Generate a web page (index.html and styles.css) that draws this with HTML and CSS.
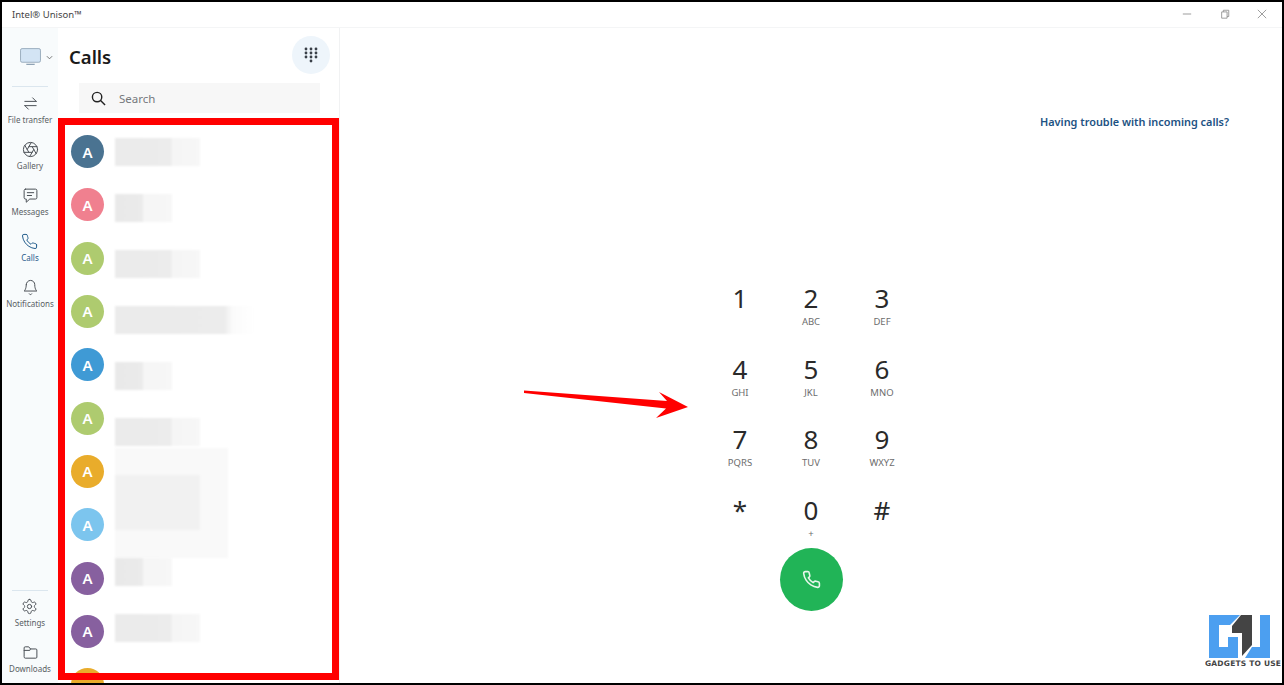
FILE: index.html
```html
<!DOCTYPE html>
<html lang="en">
<head>
  <meta charset="UTF-8">
  <title>Intel Unison - Calls</title>
  <link rel="stylesheet" href="styles.css">
</head>
<body>
  <div class="window">
    <!-- Title bar -->
    <div class="titlebar">
      <span class="app-name">Intel® Unison™</span>
      <div class="win-buttons">
        <svg class="win-icon" viewBox="0 0 12 12"><path d="M1 6h10"/></svg>
        <svg class="win-icon" viewBox="0 0 12 12"><path d="M2 3.5h6.5V11H2zM4 3.5V1.5h6.5V9H8.5"/></svg>
        <svg class="win-icon" viewBox="0 0 12 12"><path d="M1 1l10 10M11 1L1 11"/></svg>
      </div>
    </div>

    <div class="content">
      <!-- Left navigation -->
      <nav class="sidebar">
        <div class="device">
          <svg class="device-icon" viewBox="0 0 20 17">
            <rect class="screen" x="0.5" y="0.5" width="19" height="13" rx="1.5"/>
            <path class="stand" d="M6 15.5h8"/>
          </svg>
          <svg class="chevron" viewBox="0 0 8 5"><path d="M1 1l3 3 3-3"/></svg>
        </div>
        <div class="nav-group nav-top">
          <a class="nav-item">
            <svg class="nav-icon" viewBox="0 0 24 24"><path d="M4 9h16M15 4l5 5M20 15H4M9 20l-5-5"/></svg>
            <span>File transfer</span>
          </a>
          <a class="nav-item">
            <svg class="nav-icon" viewBox="0 0 24 24"><circle cx="12" cy="12" r="10"/><path d="M14.31 8l5.74 9.94M9.69 8h11.48M7.38 12l5.74-9.94M9.69 16L3.95 6.06M14.31 16H2.83M16.62 12l-5.74 9.94"/></svg>
            <span>Gallery</span>
          </a>
          <a class="nav-item">
            <svg class="nav-icon" viewBox="0 0 24 24"><path d="M5 3h14a2 2 0 0 1 2 2v10a2 2 0 0 1-2 2h-8l-5 4.5V17H5a2 2 0 0 1-2-2V5a2 2 0 0 1 2-2z"/><path d="M7.5 8h9M7.5 12h6"/></svg>
            <span>Messages</span>
          </a>
          <a class="nav-item active">
            <svg class="nav-icon" viewBox="0 0 24 24"><path d="M22 16.92v3a2 2 0 0 1-2.18 2 19.79 19.79 0 0 1-8.63-3.07 19.5 19.5 0 0 1-6-6 19.79 19.79 0 0 1-3.07-8.67A2 2 0 0 1 4.11 2h3a2 2 0 0 1 2 1.72 12.84 12.84 0 0 0 .7 2.81 2 2 0 0 1-.45 2.11L8.09 9.91a16 16 0 0 0 6 6l1.27-1.27a2 2 0 0 1 2.11-.45 12.84 12.84 0 0 0 2.81.7A2 2 0 0 1 22 16.92z"/></svg>
            <span>Calls</span>
          </a>
          <a class="nav-item">
            <svg class="nav-icon" viewBox="0 0 24 24"><path d="M6 8a6 6 0 0 1 12 0c0 7 3 9 3 9H3s3-2 3-9"/><path d="M10.3 21a1.94 1.94 0 0 0 3.4 0"/></svg>
            <span>Notifications</span>
          </a>
        </div>
        <div class="nav-group nav-bottom">
          <a class="nav-item">
            <svg class="nav-icon" viewBox="0 0 24 24"><path d="M12.22 2h-.44a2 2 0 0 0-2 2v.18a2 2 0 0 1-1 1.73l-.43.25a2 2 0 0 1-2 0l-.15-.08a2 2 0 0 0-2.73.73l-.22.38a2 2 0 0 0 .73 2.73l.15.1a2 2 0 0 1 1 1.72v.51a2 2 0 0 1-1 1.74l-.15.09a2 2 0 0 0-.73 2.73l.22.38a2 2 0 0 0 2.73.73l.15-.08a2 2 0 0 1 2 0l.43.25a2 2 0 0 1 1 1.73V20a2 2 0 0 0 2 2h.44a2 2 0 0 0 2-2v-.18a2 2 0 0 1 1-1.73l.43-.25a2 2 0 0 1 2 0l.15.08a2 2 0 0 0 2.73-.73l.22-.39a2 2 0 0 0-.73-2.73l-.15-.08a2 2 0 0 1-1-1.74v-.5a2 2 0 0 1 1-1.74l.15-.09a2 2 0 0 0 .73-2.73l-.22-.38a2 2 0 0 0-2.73-.73l-.15.08a2 2 0 0 1-2 0l-.43-.25a2 2 0 0 1-1-1.73V4a2 2 0 0 0-2-2z"/><circle cx="12" cy="12" r="3"/></svg>
            <span>Settings</span>
          </a>
          <a class="nav-item">
            <svg class="nav-icon" viewBox="0 0 24 24"><path d="M3 7V5.5A1.5 1.5 0 0 1 4.5 4h5l2.5 3h7.5A1.5 1.5 0 0 1 21 8.5v10a1.5 1.5 0 0 1-1.5 1.500h-15A1.5 1.5 0 0 1 3 18.5zM3 9h8l1-2"/></svg>
            <span>Downloads</span>
          </a>
        </div>
      </nav>

      <!-- Contact list -->
      <section class="panel">
        <div class="panel-head">
          <h1>Calls</h1>
          <button class="keypad-btn">
            <svg viewBox="0 0 14 16" class="keypad-icon">
              <circle cx="2" cy="2" r="1.4"/><circle cx="7" cy="2" r="1.4"/><circle cx="12" cy="2" r="1.4"/>
              <circle cx="2" cy="6" r="1.4"/><circle cx="7" cy="6" r="1.4"/><circle cx="12" cy="6" r="1.4"/>
              <circle cx="2" cy="10" r="1.4"/><circle cx="7" cy="10" r="1.4"/><circle cx="12" cy="10" r="1.4"/>
              <circle cx="7" cy="14" r="1.4"/>
            </svg>
          </button>
        </div>
        <div class="search">
          <svg class="search-icon" viewBox="0 0 16 16"><circle cx="6.5" cy="6.5" r="5"/><path d="M10.2 10.2L15 15"/></svg>
          <span>Search</span>
        </div>
        <div class="contacts">
          <div class="avatars">
            <div class="avatar slate">A</div>
            <div class="avatar pink">A</div>
            <div class="avatar green">A</div>
            <div class="avatar green">A</div>
            <div class="avatar blue">A</div>
            <div class="avatar green">A</div>
            <div class="avatar amber">A</div>
            <div class="avatar sky">A</div>
            <div class="avatar purple">A</div>
            <div class="avatar purple">A</div>
            <div class="avatar amber"></div>
          </div>
          <!-- blurred out contact names -->
          <div class="names">
            <div class="blur" style="width:85px"></div>
            <div class="blur half" style="width:57px"></div>
            <div class="blur" style="width:85px"></div>
            <div class="blur fade" style="width:140px"></div>
            <div class="blur half" style="width:57px"></div>
            <div class="blur tight" style="width:85px"></div>
            <div class="blur block" style="width:113px"></div>
            <div class="blur half" style="width:57px"></div>
            <div class="blur" style="width:85px"></div>
          </div>
        </div>
      </section>

      <!-- Dial pad -->
      <main class="main">
        <a class="help-link">Having trouble with incoming calls?</a>
        <div class="dialpad">
          <div class="key"><span class="digit">1</span></div>
          <div class="key"><span class="digit">2</span><span class="letters">ABC</span></div>
          <div class="key"><span class="digit">3</span><span class="letters">DEF</span></div>
          <div class="key"><span class="digit">4</span><span class="letters">GHI</span></div>
          <div class="key"><span class="digit">5</span><span class="letters">JKL</span></div>
          <div class="key"><span class="digit">6</span><span class="letters">MNO</span></div>
          <div class="key"><span class="digit">7</span><span class="letters">PQRS</span></div>
          <div class="key"><span class="digit">8</span><span class="letters">TUV</span></div>
          <div class="key"><span class="digit">9</span><span class="letters">WXYZ</span></div>
          <div class="key"><span class="digit">*</span></div>
          <div class="key"><span class="digit">0</span><span class="letters">+</span></div>
          <div class="key"><span class="digit">#</span></div>
        </div>
        <button class="call-btn">
          <svg viewBox="0 0 24 24"><path d="M22 16.92v3a2 2 0 0 1-2.18 2 19.79 19.79 0 0 1-8.63-3.07 19.5 19.5 0 0 1-6-6 19.79 19.79 0 0 1-3.07-8.67A2 2 0 0 1 4.11 2h3a2 2 0 0 1 2 1.72 12.84 12.84 0 0 0 .7 2.81 2 2 0 0 1-.45 2.11L8.09 9.91a16 16 0 0 0 6 6l1.27-1.27a2 2 0 0 1 2.11-.45 12.84 12.84 0 0 0 2.81.7A2 2 0 0 1 22 16.92z"/></svg>
        </button>
      </main>
    </div>

    <!-- Annotations on top of the screenshot -->
    <div class="red-box"></div>
    <svg class="red-arrow" viewBox="0 0 170 32">
      <path d="M3 2.5L3 5L145 20.5L135 30L167 19L138 4L146 13Z"/>
    </svg>
    <div class="watermark">
      <svg viewBox="0 0 61 43">
        <path class="logo-blue" d="M0 0H31L21 10H10V32H19V22H29V43H0Z"/>
        <path class="logo-dark" d="M32 0H43V30L33 41V18H23V11Z"/>
        <path class="logo-blue" d="M51 0H61V43H36L43 32H51Z"/>
      </svg>
      <span>GADGETS TO USE</span>
    </div>
  </div>
</body>
</html>
```

FILE: styles.css
```css
* {
  box-sizing: border-box;
}
html, body {
  margin: 0;
  height: 100%;
  overflow: hidden;
}
body {
  font-family: "Noto Sans", "Open Sans", sans-serif;
  background: #fff;
  color: #1b1b1b;
}
.window {
  position: relative;
  width: 1284px;
  height: 685px;
  display: flex;
  flex-direction: column;
  border: 2px solid #000;
  overflow: hidden;
}
.titlebar {
  height: 26px;
  flex: none;
  display: flex;
  align-items: center;
  justify-content: space-between;
  padding: 0 15px 1px 10px;
  border-bottom: 1px solid #f4f5f6;
}
.app-name {
  font-size: 9.5px;
  color: #444;
}
.win-buttons {
  display: flex;
  gap: 27.5px;
  margin-top: -1px;
}
.win-icon {
  width: 10px;
  height: 10px;
  fill: none;
  stroke: #8a8a8a;
  stroke-width: 1;
}
.content {
  flex: 1;
  display: flex;
  min-height: 0;
}

/* sidebar */
.sidebar {
  width: 56px;
  flex: none;
  display: flex;
  flex-direction: column;
  align-items: center;
  background: #f8fbfc;
}
.device {
  height: 58px;
  width: 100%;
  flex: none;
  display: flex;
  align-items: center;
  gap: 5px;
  padding-left: 18px;
}
.device-icon {
  width: 21px;
  height: 18px;
}
.screen {
  fill: #d3e4f4;
  stroke: #8fa3b5;
  stroke-width: 0.8;
}
.stand {
  fill: none;
  stroke: #8fa3b5;
  stroke-width: 1.2;
}
.chevron {
  width: 7px;
  height: 5px;
  fill: none;
  stroke: #666;
  stroke-width: 1;
}
.nav-group {
  width: 100%;
  display: flex;
  flex-direction: column;
  align-items: center;
}
.nav-group::before {
  content: "";
  width: 36px;
  height: 1px;
  background: #dbe6ee;
  flex: none;
}
.nav-top {
  flex: 1;
}
.nav-top .nav-item:first-of-type {
  margin-top: 1px;
}
.nav-item {
  height: 46px;
  flex: none;
  display: flex;
  flex-direction: column;
  align-items: center;
  padding-top: 7px;
  font-size: 8px;
  color: #5a5f64;
  white-space: nowrap;
}
.nav-item span {
  line-height: 12px;
  margin-top: 2px;
}
.nav-item.active {
  color: #1f5a8a;
}
.nav-icon {
  width: 17px;
  height: 17px;
  flex: none;
  fill: none;
  stroke: #4a4f55;
  stroke-width: 1.4;
  stroke-linecap: round;
  stroke-linejoin: round;
}
.active .nav-icon {
  stroke: #1f5a8a;
}

/* contact list */
.panel {
  width: 282px;
  flex: none;
  display: flex;
  flex-direction: column;
  border-right: 1px solid #f1f2f3;
  overflow: hidden;
}
.panel-head {
  height: 53px;
  flex: none;
  display: flex;
  align-items: center;
  justify-content: space-between;
  padding: 0 9px 0 11px;
}
.panel-head h1 {
  font-size: 18.5px;
  font-weight: 600;
  margin: 4px 0 0;
  color: #1a1a1a;
}
.keypad-btn {
  width: 38px;
  height: 38px;
  border: none;
  border-radius: 50%;
  background: #eef5fb;
  display: flex;
  align-items: center;
  justify-content: center;
  padding: 0;
}
.keypad-icon {
  width: 14px;
  height: 16px;
  fill: #3a4048;
}
.search {
  height: 30px;
  flex: none;
  margin: 2px 19px 0 21px;
  background: #f7f7f7;
  display: flex;
  align-items: center;
  gap: 13px;
  padding-left: 12px;
  font-size: 11.5px;
  color: #75797d;
}
.search-icon {
  width: 15px;
  height: 15px;
  fill: none;
  stroke: #222;
  stroke-width: 1.5;
}
.contacts {
  flex: none;
  display: flex;
  gap: 11px;
  padding: 22px 0 0 13px;
}
.avatars {
  display: flex;
  flex-direction: column;
  gap: 20.33px;
  flex: none;
}
.avatar {
  width: 33px;
  height: 33px;
  flex: none;
  border-radius: 50%;
  color: #fff;
  font-size: 15px;
  font-weight: 600;
  display: flex;
  align-items: center;
  justify-content: center;
}
.slate { background: #4a7391; }
.pink { background: #f0808f; }
.green { background: #aecb6f; }
.blue { background: #3f9ad5; }
.amber { background: #e9ac2b; }
.sky { background: #7cc5ee; }
.purple { background: #87609f; }
.names {
  display: flex;
  flex-direction: column;
  padding-top: 3px;
}
.blur {
  height: 28px;
  margin-bottom: 28px;
  flex: none;
  background: linear-gradient(90deg, #ebebeb, #ececec 66%, #f5f5f5 67%, #f7f7f7);
  filter: blur(0.8px);
}
.half {
  background: linear-gradient(90deg, #e9e9e9, #ebebeb 49%, #f6f6f6 50%, #f7f7f7);
}
.fade {
  background: linear-gradient(90deg, #ebebeb, #ececec 78%, #fbfbfb 84%, #fff);
}
.tight {
  margin-bottom: 2px;
}
.block {
  height: 110px;
  margin-bottom: 0;
  background:
    linear-gradient(#f1f1f1, #f1f1f1) no-repeat left 27px / 75% 55px,
    #f9f9f9;
}

/* dial pad */
.main {
  flex: 1;
  display: flex;
  flex-direction: column;
  align-items: center;
  padding-top: 86px;
}
.help-link {
  align-self: flex-end;
  margin-right: 53px;
  font-size: 10.9px;
  font-weight: 600;
  line-height: 16px;
  color: #1d5283;
}
.dialpad {
  display: grid;
  grid-template-columns: repeat(3, 71px);
  grid-auto-rows: 70.7px;
  margin-top: 151px;
}
.key {
  display: flex;
  flex-direction: column;
  align-items: center;
}
.digit {
  font-size: 26px;
  line-height: 34px;
  color: #2a2a2a;
}
.letters {
  font-size: 9.5px;
  line-height: 12px;
  margin-top: 1px;
  color: #6d6d6d;
}
.call-btn {
  width: 63px;
  height: 63px;
  flex: none;
  margin-top: -16px;
  border: none;
  border-radius: 50%;
  background: #21b457;
  display: flex;
  align-items: center;
  justify-content: center;
  padding: 0;
}
.call-btn svg {
  width: 19px;
  height: 19px;
  fill: none;
  stroke: #e6f6ea;
  stroke-width: 2;
}

/* annotations */
.red-box {
  position: absolute;
  left: 56px;
  top: 116px;
  width: 281px;
  height: 562px;
  border: 7px solid #f00;
}
.red-arrow {
  position: absolute;
  left: 519px;
  top: 386px;
  width: 170px;
  height: 32px;
  fill: #f00;
}
.watermark {
  position: absolute;
  right: 0;
  top: 613px;
  width: 77px;
  height: 56px;
  overflow: hidden;
}
.watermark svg {
  display: block;
  width: 61px;
  height: 43px;
  margin-left: 4px;
}
.watermark span {
  display: block;
  margin-top: 1px;
  font-family: "DejaVu Sans", sans-serif;
  font-size: 7.5px;
  font-weight: 700;
  line-height: 10px;
  letter-spacing: 0.2px;
  white-space: nowrap;
  color: #444;
}
.logo-blue {
  fill: #4c9ff0;
}
.logo-dark {
  fill: #444;
}
```
